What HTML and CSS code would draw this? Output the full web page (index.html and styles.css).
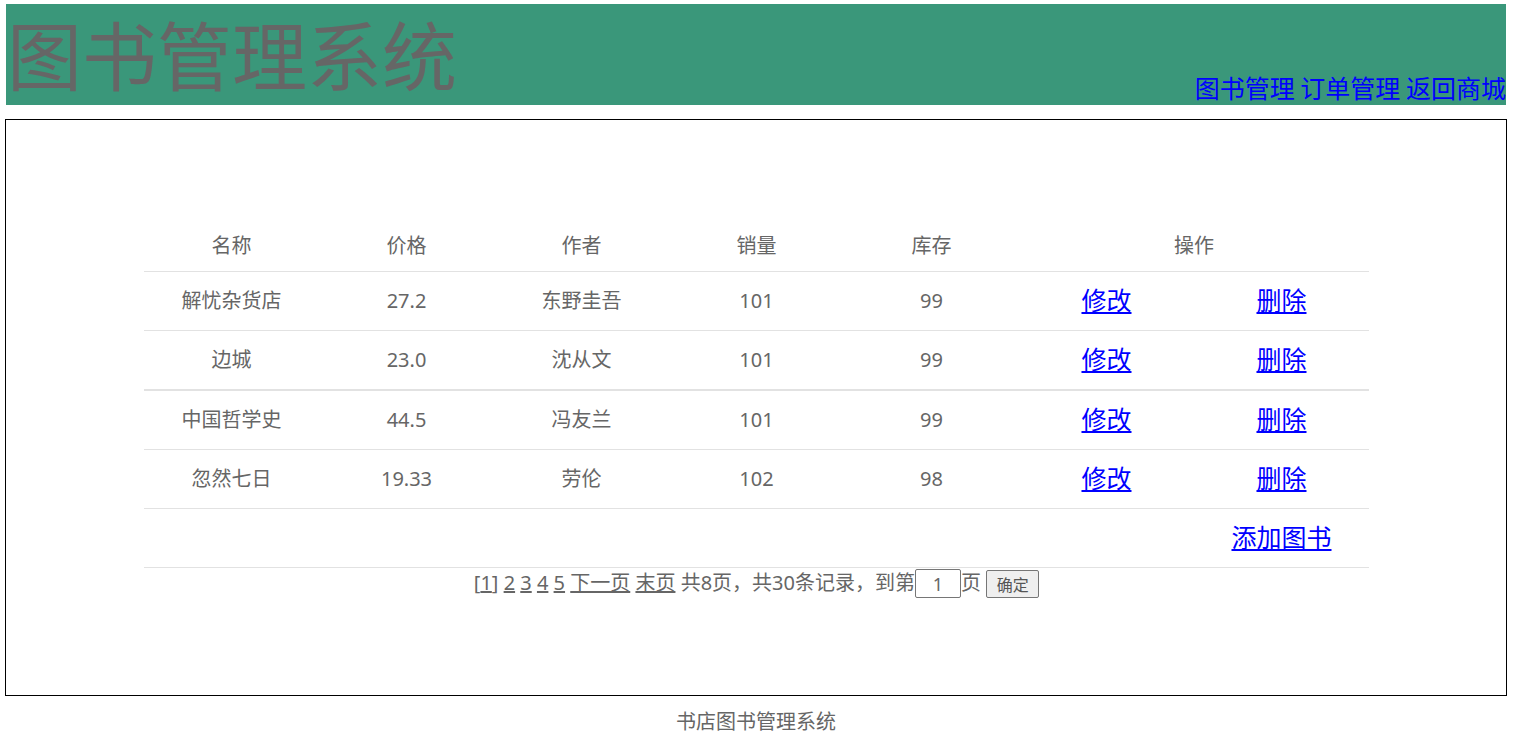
FILE: index.html
```html
<!DOCTYPE html>
<html lang="zh-CN">
<head>
<meta charset="utf-8">
<title>图书管理系统</title>
<link rel="stylesheet" href="styles.css">
</head>
<body>
<div class="header">
  <div class="title">图书管理系统</div>
  <div class="nav"><a href="#">图书管理</a> <a href="#">订单管理</a> <a href="#">返回商城</a></div>
</div>
<div class="main">
  <table class="books">
    <thead>
      <tr><th>名称</th><th>价格</th><th>作者</th><th>销量</th><th>库存</th><th colspan="2">操作</th></tr>
    </thead>
    <tbody>
      <tr><td>解忧杂货店</td><td>27.2</td><td>东野圭吾</td><td>101</td><td>99</td><td><a class="op" href="#">修改</a></td><td><a class="op" href="#">删除</a></td></tr>
      <tr class="thick"><td>边城</td><td>23.0</td><td>沈从文</td><td>101</td><td>99</td><td><a class="op" href="#">修改</a></td><td><a class="op" href="#">删除</a></td></tr>
      <tr><td>中国哲学史</td><td>44.5</td><td>冯友兰</td><td>101</td><td>99</td><td><a class="op" href="#">修改</a></td><td><a class="op" href="#">删除</a></td></tr>
      <tr><td>忽然七日</td><td>19.33</td><td>劳伦</td><td>102</td><td>98</td><td><a class="op" href="#">修改</a></td><td><a class="op" href="#">删除</a></td></tr>
      <tr class="add"><td colspan="6"></td><td><a class="op" href="#">添加图书</a></td></tr>
      <tr class="pager"><td colspan="7">[<a href="#">1</a>] <a href="#">2</a> <a href="#">3</a> <a href="#">4</a> <a href="#">5</a> <a href="#">下一页</a> <a href="#">末页</a> 共8页，共30条记录，到第<input class="page-input" type="text" value="1">页 <button class="go">确定</button></td></tr>
    </tbody>
  </table>
</div>
<div class="footer">书店图书管理系统</div>
</body>
</html>
```

FILE: styles.css
```css
html, body {
  margin: 0;
  padding: 0;
  background: #fff;
}
body {
  padding-top: 4px;
  font-family: "Noto Sans", "Noto Sans CJK SC", sans-serif;
  color: #666;
}
.header {
  margin-left: 6px;
  width: 1500px;
  height: 101px;
  background: #3a977a;
  display: flex;
  justify-content: space-between;
  font-family: "Noto Sans CJK SC", sans-serif;
}
.title {
  align-self: flex-start;
  margin-top: 11px;
  margin-left: 1px;
  font-size: 75px;
  line-height: 75px;
  color: #666;
  white-space: nowrap;
}
.nav {
  align-self: flex-end;
  font-size: 25px;
  line-height: 36px;
  white-space: nowrap;
}
.nav a {
  color: #00f;
  text-decoration: none;
}
.main {
  margin: 14px 0 0 5px;
  width: 1500px;
  height: 575px;
  border: 1px solid #000;
}
.books {
  margin: 102px 0 0 138px;
  width: 1225px;
  border-collapse: collapse;
  table-layout: fixed;
  font-size: 20px;
  line-height: 28px;
  color: #666;
}
.books th {
  font-weight: normal;
  height: 48px;
  padding: 0 0 1px;
  text-align: center;
  vertical-align: middle;
  border-bottom: 1px solid #e2e2e2;
}
.books td {
  height: 57px;
  padding: 0 0 1px;
  text-align: center;
  vertical-align: middle;
  border-bottom: 1px solid #e2e2e2;
}
.books tr.thick td {
  border-bottom: 2px solid #e2e2e2;
}
.books tr.add td {
  height: 58px;
  padding: 0;
}
a.op {
  color: #00f;
  font-family: "Noto Sans CJK SC", sans-serif;
  font-size: 25px;
  text-decoration: underline;
}
.books tr.pager td {
  height: 30px;
  padding: 0;
  border-bottom: none;
  font-size: 20px;
  line-height: 30px;
  white-space: nowrap;
}
.pager a {
  color: #666;
  text-decoration: underline;
}
.page-input {
  box-sizing: border-box;
  width: 46px;
  height: 29px;
  margin: -2px 0 0;
  padding: 0;
  border: 1px solid #767676;
  border-radius: 2px;
  text-align: center;
  font-family: "Noto Sans", sans-serif;
  font-size: 18px;
  color: #666;
  vertical-align: middle;
}
.go {
  box-sizing: border-box;
  width: 53px;
  height: 28px;
  margin: -2px 0 0;
  padding: 0;
  border: 1px solid #767676;
  border-radius: 2px;
  background: #efefef;
  font-family: "Noto Sans CJK SC", sans-serif;
  font-size: 16px;
  color: #555;
  vertical-align: middle;
}
.footer {
  margin-left: 5px;
  width: 1502px;
  text-align: center;
  font-size: 20px;
  line-height: 28px;
  padding-top: 12px;
  color: #666;
}
```
